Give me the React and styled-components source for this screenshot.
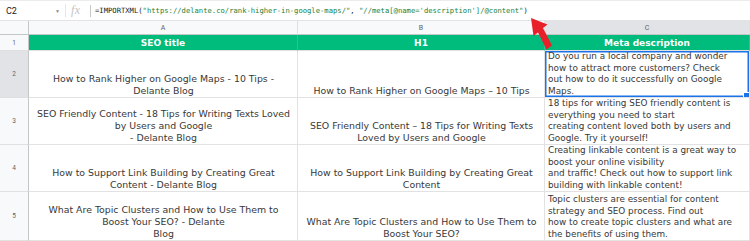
import React from "react";
import styled, { createGlobalStyle } from "styled-components";

const Global = createGlobalStyle`
  html, body { margin: 0; padding: 0; background: #fff; }
  body { width: 750px; height: 241px; overflow: hidden; }
`;

const Page = styled.div`
  position: relative;
  width: 750px;
  height: 241px;
  overflow: hidden;
  font-family: "DejaVu Sans", "Open Sans", sans-serif;
`;

const FormulaBar = styled.div`
  display: flex;
  align-items: center;
  height: 19px;
  border-top: 1px solid #ececec;
  border-bottom: 1px solid #e3e3e3;
  box-sizing: content-box;
`;

const NameBox = styled.div`
  display: flex;
  align-items: center;
  justify-content: space-between;
  width: 54px;
  padding: 0 5px 0 6px;
  font-family: Roboto, "Liberation Sans", sans-serif;
  font-size: 9px;
  color: #202124;
  border-right: 1px solid #e6e6e6;
  height: 13px;
`;

const Caret = styled.span`
  font-size: 5px;
  color: #8a8a8a;
`;

const Fx = styled.span`
  font-family: "Liberation Serif", serif;
  font-style: italic;
  font-size: 12px;
  color: #c4c4c4;
  margin-left: 5px;
  width: 19px;
  letter-spacing: 0.5px;
`;

const Sep = styled.span`
  width: 1px;
  height: 12px;
  background: #c8c8c8;
  margin-right: 4px;
`;

const Formula = styled.div`
  font-family: "DejaVu Sans Mono", "Liberation Mono", monospace;
  font-size: 7.2px;
  color: #202124;
  white-space: nowrap;
`;

const Str = styled.span`
  color: #188038;
`;

const Grid = styled.div`
  display: grid;
  grid-template-columns: 29px 269px 247px 205px;
  grid-template-rows: 14px 16px 47px 47px 47px 49px;
`;

const Corner = styled.div`
  background: #f8f9fa;
  border-right: 1px solid #c4c7c5;
  border-bottom: 1px solid #c4c7c5;
`;

const ColHead = styled.div`
  display: flex;
  align-items: center;
  justify-content: center;
  background: ${(p) => (p.$active ? "#e1e3e6" : "#f8f9fa")};
  border-right: 1px solid #e0e0e0;
  border-bottom: 1px solid #c4c7c5;
  font-family: Roboto, "Liberation Sans", sans-serif;
  font-size: 7px;
  color: #5f6368;
`;

const RowHead = styled.div`
  display: flex;
  align-items: center;
  justify-content: center;
  background: ${(p) => (p.$active ? "#e1e3e6" : "#f8f9fa")};
  border-right: 1px solid #c4c7c5;
  border-bottom: 1px solid #e0e0e0;
  font-family: Roboto, "Liberation Sans", sans-serif;
  font-size: 6.5px;
  color: #5f6368;
`;

const HeadCell = styled.div`
  display: flex;
  align-items: center;
  justify-content: center;
  background: #00bc7c;
  border-right: 1px solid #2cc28e;
  border-bottom: 1px solid #e0e0e0;
  color: #fff;
  font-weight: 700;
  font-size: 9px;
`;

const Cell = styled.div`
  position: relative;
  display: flex;
  flex-direction: column;
  justify-content: flex-end;
  align-items: ${(p) => (p.$left ? "flex-start" : "center")};
  text-align: ${(p) => (p.$left ? "left" : "center")};
  padding: 0 2px 0 3px;
  border-right: 1px solid #e2e2e2;
  border-bottom: 1px solid #e2e2e2;
  font-size: ${(p) => (p.$left ? "8.85px" : "9.4px")};
  line-height: ${(p) => (p.$left ? "11.4px" : "12px")};
  color: #383838;
  overflow: hidden;
  box-shadow: ${(p) => (p.$selected ? "inset 0 0 0 1.5px #1a73e8" : "none")};
`;

const Line = styled.span`
  white-space: nowrap;
`;

const Handle = styled.span`
  position: absolute;
  right: -1px;
  bottom: -2px;
  width: 5px;
  height: 5px;
  background: #1a73e8;
  border: 1px solid #fff;
`;

const Arrow = styled.svg`
  position: absolute;
  left: 528px;
  top: 16px;
`;

const rows = [
  {
    n: 2,
    a: ["How to Rank Higher on Google Maps - 10 Tips -", "Delante Blog"],
    b: ["How to Rank Higher on Google Maps – 10 Tips"],
    c: [
      "Do you run a local company and wonder",
      "how to attract more customers? Check",
      "out how to do it successfully on Google",
      "Maps.",
    ],
  },
  {
    n: 3,
    a: [
      "SEO Friendly Content - 18 Tips for Writing Texts Loved",
      "by Users and Google",
      "- Delante Blog",
    ],
    b: ["SEO Friendly Content – 18 Tips for Writing Texts", "Loved by Users and Google"],
    c: [
      "18 tips for writing SEO friendly content is",
      "everything you need to start",
      "creating content loved both by users and",
      "Google. Try it yourself!",
    ],
  },
  {
    n: 4,
    a: ["How to Support Link Building by Creating Great", "Content - Delante Blog"],
    b: ["How to Support Link Building by Creating Great", "Content"],
    c: [
      "Creating linkable content is a great way to",
      "boost your online visibility",
      "and traffic! Check out how to support link",
      "building with linkable content!",
    ],
  },
  {
    n: 5,
    a: ["What Are Topic Clusters and How to Use Them to", "Boost Your SEO? - Delante", "Blog"],
    b: ["What Are Topic Clusters and How to Use Them to", "Boost Your SEO?"],
    c: [
      "Topic clusters are essential for content",
      "strategy and SEO process. Find out",
      "how to create topic clusters and what are",
      "the benefits of using them.",
    ],
  },
];

const Lines = ({ items }) => items.map((t, i) => <Line key={i}>{t}</Line>);

export default function App() {
  return (
    <>
      <Global />
      <Page>
        <FormulaBar>
          <NameBox>
            <span>C2</span>
            <Caret>▼</Caret>
          </NameBox>
          <Fx>fx</Fx>
          <Sep />
          <Formula>
            =IMPORTXML(<Str>"https://delante.co/rank-higher-in-google-maps/"</Str>,{" "}
            <Str>"//meta[@name='description']/@content"</Str>)
          </Formula>
        </FormulaBar>
        <Grid>
          <Corner />
          <ColHead>A</ColHead>
          <ColHead>B</ColHead>
          <ColHead $active>C</ColHead>
          <RowHead>1</RowHead>
          <HeadCell>SEO title</HeadCell>
          <HeadCell>H1</HeadCell>
          <HeadCell>Meta description</HeadCell>
          {rows.map((r) => (
            <React.Fragment key={r.n}>
              <RowHead $active={r.n === 2}>{r.n}</RowHead>
              <Cell>
                <Lines items={r.a} />
              </Cell>
              <Cell>
                <Lines items={r.b} />
              </Cell>
              <Cell $left $selected={r.n === 2}>
                <Lines items={r.c} />
                {r.n === 2 && <Handle />}
              </Cell>
            </React.Fragment>
          ))}
        </Grid>
        <Arrow width="26" height="36" viewBox="0 0 26 36">
          <path
            d="M3 2 L19.5 8.5 L15 12 L24 29.5 L18.5 33.5 L10 16.5 L5.5 20 Z"
            fill="#e8202a"
          />
        </Arrow>
      </Page>
    </>
  );
}
